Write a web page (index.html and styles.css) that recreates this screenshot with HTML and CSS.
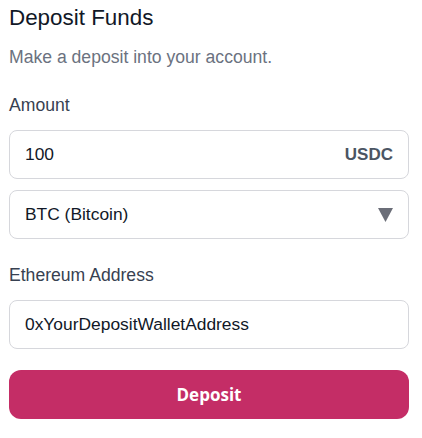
FILE: index.html
```html
<!DOCTYPE html>
<html lang="en">
<head>
<meta charset="utf-8">
<title>Deposit Funds</title>
<link rel="stylesheet" href="styles.css">
</head>
<body>
<main class="card">
  <h1 class="title">Deposit Funds</h1>
  <p class="subtitle">Make a deposit into your account.</p>

  <label class="label label-amount">Amount</label>
  <div class="field">
    <span class="field-value">100</span>
    <span class="suffix">USDC</span>
  </div>
  <div class="field field-select">
    <span class="field-value">BTC (Bitcoin)</span>
    <svg class="caret" width="15" height="14" viewBox="0 0 15 14" aria-hidden="true"><polygon points="0,0 15,0 7.5,14" fill="#6b6e78"/></svg>
  </div>

  <label class="label label-eth">Ethereum Address</label>
  <div class="field">
    <span class="field-value">0xYourDepositWalletAddress</span>
  </div>

  <button class="btn" type="button">Deposit</button>
</main>
</body>
</html>
```

FILE: styles.css
```css
* { box-sizing: border-box; }

html, body {
  margin: 0;
  padding: 0;
  background: #ffffff;
}

body {
  font-family: "Liberation Sans", Arial, sans-serif;
  color: #111827;
}

.card {
  width: 400px;
  margin-left: 9px;
  padding-top: 4px;
  display: flex;
  flex-direction: column;
}

.title {
  margin: 0;
  font-size: 22.4px;
  line-height: 28px;
  font-weight: 400;
  color: #111827;
}

.subtitle {
  margin: 15px 0 0;
  font-size: 17.6px;
  line-height: 20px;
  color: #6b7280;
}

.label {
  display: block;
  font-size: 17.6px;
  line-height: 20px;
  color: #374151;
}

.label-amount { margin-top: 28px; }
.label-eth { margin-top: 26px; }

.field {
  height: 49px;
  margin-top: 15px;
  border: 1px solid #d6d7dc;
  border-radius: 8px;
  padding: 0 15px;
  display: flex;
  align-items: center;
  justify-content: space-between;
  font-size: 17.4px;
  color: #111827;
}

.field-select { margin-top: 11px; }

.suffix {
  font-weight: 700;
  font-size: 17px;
  color: #4b5563;
}

.caret {
  display: block;
  margin-top: 1px;
}

.btn {
  margin-top: 21px;
  height: 49px;
  width: 100%;
  border: 0;
  border-radius: 12px;
  background: #c42d66;
  color: #ffffff;
  font-family: "Open Sans", "Noto Sans", sans-serif;
  font-weight: 700;
  font-size: 17px;
  cursor: pointer;
}
```
